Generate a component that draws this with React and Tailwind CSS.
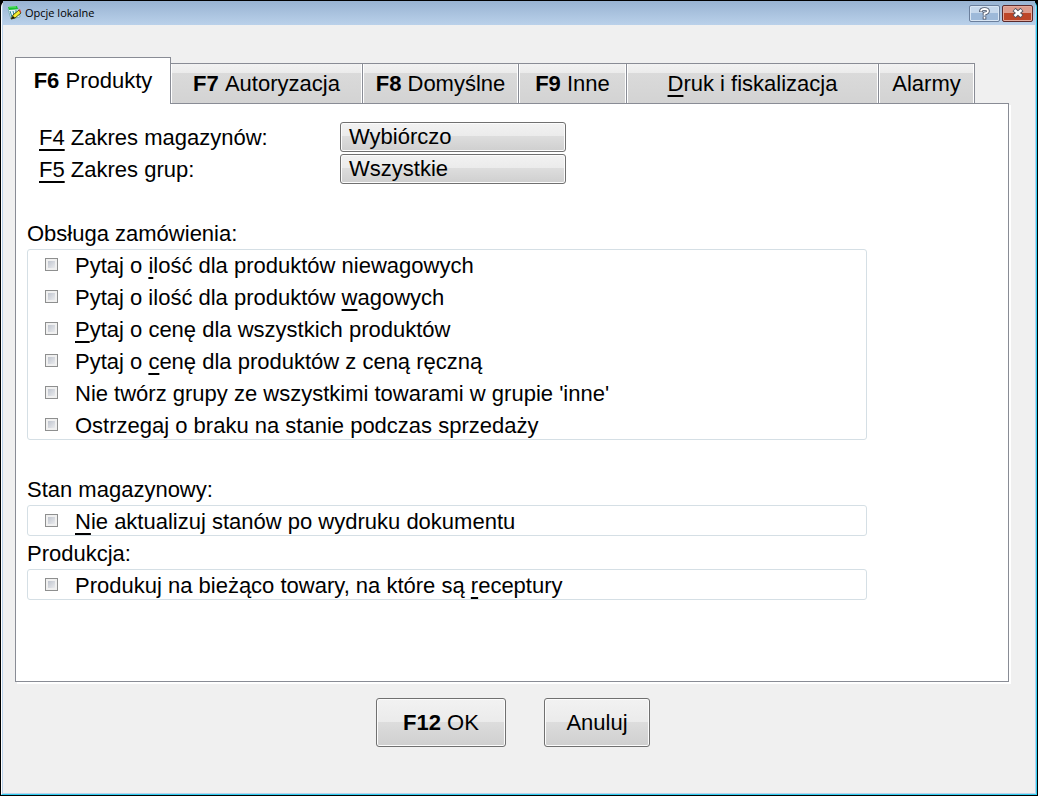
import { useState } from "react";

const tabs = [
  { id: "produkty", hotkey: "F6", label: "Produkty", width: "w-[156px]" },
  { id: "autoryzacja", hotkey: "F7", label: "Autoryzacja", width: "w-[192px]" },
  { id: "domyslne", hotkey: "F8", label: "Domyślne", width: "w-[156px]" },
  { id: "inne", hotkey: "F9", label: "Inne", width: "w-[108px]" },
  { id: "druk", access: "D", label: "ruk i fiskalizacja", width: "w-[252px]" },
  { id: "alarmy", label: "Alarmy", width: "w-[96px]" },
];

const ranges = [
  { id: "magazyny", hotkey: "F4", label: "Zakres magazynów:", value: "Wybiórczo" },
  { id: "grupy", hotkey: "F5", label: "Zakres grup:", value: "Wszystkie" },
];

// every option is [text before, underlined access key, text after]
const groups = [
  {
    title: "Obsługa zamówienia:",
    className: "mt-8",
    options: [
      ["Pytaj o ", "i", "lość dla produktów niewagowych"],
      ["Pytaj o ilość dla produktów ", "w", "agowych"],
      ["", "P", "ytaj o cenę dla wszystkich produktów"],
      ["Pytaj o ", "c", "enę dla produktów z ceną ręczną"],
      ["Nie twórz grupy ze wszystkimi towarami w grupie 'inne'", "", ""],
      ["Ostrzegaj o braku na stanie podczas sprzedaży", "", ""],
    ],
  },
  {
    title: "Stan magazynowy:",
    className: "mt-8",
    options: [["", "N", "ie aktualizuj stanów po wydruku dokumentu"]],
  },
  {
    title: "Produkcja:",
    className: "",
    options: [["Produkuj na bieżąco towary, na które są ", "r", "eceptury"]],
  },
];

const buttonStyle =
  "rounded-[3px] border border-[#707070] bg-[linear-gradient(#f2f2f2,#ebebeb_48%,#dddddd_48%,#cfcfcf)] shadow-[inset_0_0_0_1px_#fcfcfc] whitespace-nowrap";

function Key({ children }) {
  return (
    <span className="underline decoration-2 underline-offset-4 [text-decoration-skip-ink:none]">
      {children}
    </span>
  );
}

function AppIcon() {
  return (
    <svg width="16" height="16" viewBox="0 0 16 16" aria-hidden="true">
      <path d="M1 4h11l1 8-9 2z" fill="#e8f4f6" stroke="#7fb0b8" />
      <path d="M1 2l9-1 1 3-9 1z" fill="#19c32f" />
      <path d="M2 2h7" stroke="#6fe87a" />
      <path d="M3 6l2 6M6 6l1 4M9 5v3" stroke="#2a8799" />
      <path d="M6 10l6-5 2 3-6 5-4 1z" fill="#f6ee2c" stroke="#4b4a16" />
      <path d="M12 5l1-1 1 3-1 1z" fill="#e0392b" />
      <path d="M4 14l4-1-2-2z" fill="#111" />
    </svg>
  );
}

function TitleBar() {
  return (
    <header className="flex h-6 items-center bg-linear-to-b from-[#98b3d2] to-[#bad1ea] pl-1 pr-0.5">
      <AppIcon />
      <h1 className="ml-0.5 flex-1 font-['Open_Sans','Noto_Sans',sans-serif] text-[11px] leading-4 text-black">
        Opcje lokalne
      </h1>
      <div className="flex gap-0.5">
        <button
          aria-label="Pomoc"
          className="flex h-[17px] w-[31px] items-center justify-center rounded-xs border border-[#6b7f9c] bg-linear-to-b from-[#c6d8ec] from-50% to-[#9db9d9] to-50% shadow-[inset_0_0_0_1px_#d9e6f4]"
        >
          <svg width="11" height="13" viewBox="0 0 11 13" fill="none" aria-hidden="true">
            <path d="M2 5V4Q2 2 5.500 2T9 4Q9 6 5.500 6.500V8.500M5.500 9.500V12.500" stroke="#4a5365" strokeWidth="3.600" />
            <path d="M2 4.500V4Q2 2 5.500 2T9 4Q9 6 5.500 6.500V8.500M5.500 9.800V11.800" stroke="#fff" strokeWidth="1.800" />
          </svg>
        </button>
        <button
          aria-label="Zamknij"
          className="flex h-[17px] w-[31px] items-center justify-center rounded-xs border border-[#5b2a2c] bg-linear-to-b from-[#dc9a8c] from-50% to-[#bd4528] to-50% shadow-[inset_0_0_0_1px_#e5aa9c]"
        >
          <svg width="12" height="10" viewBox="0 0 12 10" fill="none" aria-hidden="true">
            <path d="M2 1.500l8 7M10 1.500l-8 7" stroke="#53535f" strokeWidth="4.500" />
            <path d="M2.500 2l7 6M9.500 2l-7 6" stroke="#fff" strokeWidth="2.500" />
          </svg>
        </button>
      </div>
    </header>
  );
}

function TabBar({ active, onChange }) {
  return (
    <div role="tablist" className="flex items-end">
      {tabs.map((tab) => {
        const isActive = tab.id === active;
        return (
          <button
            key={tab.id}
            role="tab"
            aria-selected={isActive}
            onClick={() => onChange(tab.id)}
            className={`${tab.width} whitespace-nowrap border-[#898c95] ${
              isActive
                ? "relative z-10 -mb-px h-[47px] border-x border-t bg-white"
                : "h-10 border-r border-t bg-[linear-gradient(#f2f2f2,#ebebeb_24%,#dadada_24%,#d3d3d3)] shadow-[inset_1px_0_0_#fff,inset_-1px_0_0_#fff]"
            }`}
          >
            {tab.hotkey && <b>{tab.hotkey} </b>}
            {tab.access && <Key>{tab.access}</Key>}
            {tab.label}
          </button>
        );
      })}
    </div>
  );
}

function OptionGroup({ title, options, className }) {
  return (
    <fieldset className={className}>
      <legend className="h-8 leading-8">{title}</legend>
      <div className="-mt-px mb-0.5 w-[840px] max-w-full rounded-[3px] border border-[#d5dfe5]">
        {options.map(([before, access, after], i) => (
          <label
            key={i}
            className="flex h-8 items-start whitespace-nowrap pl-[17px] leading-8 last:h-[29px]"
          >
            <input
              type="checkbox"
              className="mr-[17px] mt-2 size-[13px] shrink-0 appearance-none border border-[#8e8f8f] bg-linear-to-br from-[#b4bac6] to-[#f6f6f6] shadow-[inset_0_0_0_2px_#f0f0f0] checked:from-[#2f5d9b] checked:to-[#2f5d9b]"
            />
            <span>
              {before}
              {access && <Key>{access}</Key>}
              {after}
            </span>
          </label>
        ))}
      </div>
    </fieldset>
  );
}

export default function App() {
  const [active, setActive] = useState("produkty");

  return (
    <div className="min-h-screen bg-black p-px">
      <div className="flex min-h-[calc(100vh-2px)] flex-col rounded-t-md border-b border-l border-r border-b-[#2fcdf0] border-l-white border-r-[#2fcdf0] bg-[#b9d1ea] px-px pb-px font-['Liberation_Sans_Narrow','Liberation_Sans',sans-serif] text-[22px] leading-8 text-black">
        <TitleBar />
        <main className="flex flex-1 flex-col bg-[#f0f0f0] pl-3 pr-[26px] pt-8">
          <TabBar active={active} onChange={setActive} />
          <section
            role="tabpanel"
            className="border border-[#898c95] bg-white pb-[79px] pl-[11px] pr-4 pt-[18px] shadow-[2px_2px_0_#fff]"
          >
            {ranges.map((range) => (
              <div key={range.id} className="flex h-8 items-start pl-3">
                <label htmlFor={range.id} className="w-[301px] leading-8">
                  <Key>{range.hotkey}</Key> {range.label}
                </label>
                <button
                  id={range.id}
                  className={`${buttonStyle} h-[30px] w-[226px] pl-2 text-left leading-7`}
                >
                  {range.value}
                </button>
              </div>
            ))}
            {groups.map((group) => (
              <OptionGroup key={group.title} {...group} />
            ))}
          </section>
          <footer className="flex justify-center gap-[38px] pb-8 pl-0.5 pt-4">
            <button className={`${buttonStyle} h-[49px] w-[130px]`}>
              <b>F12</b> OK
            </button>
            <button className={`${buttonStyle} h-[49px] w-[106px]`}>Anuluj</button>
          </footer>
        </main>
      </div>
    </div>
  );
}
